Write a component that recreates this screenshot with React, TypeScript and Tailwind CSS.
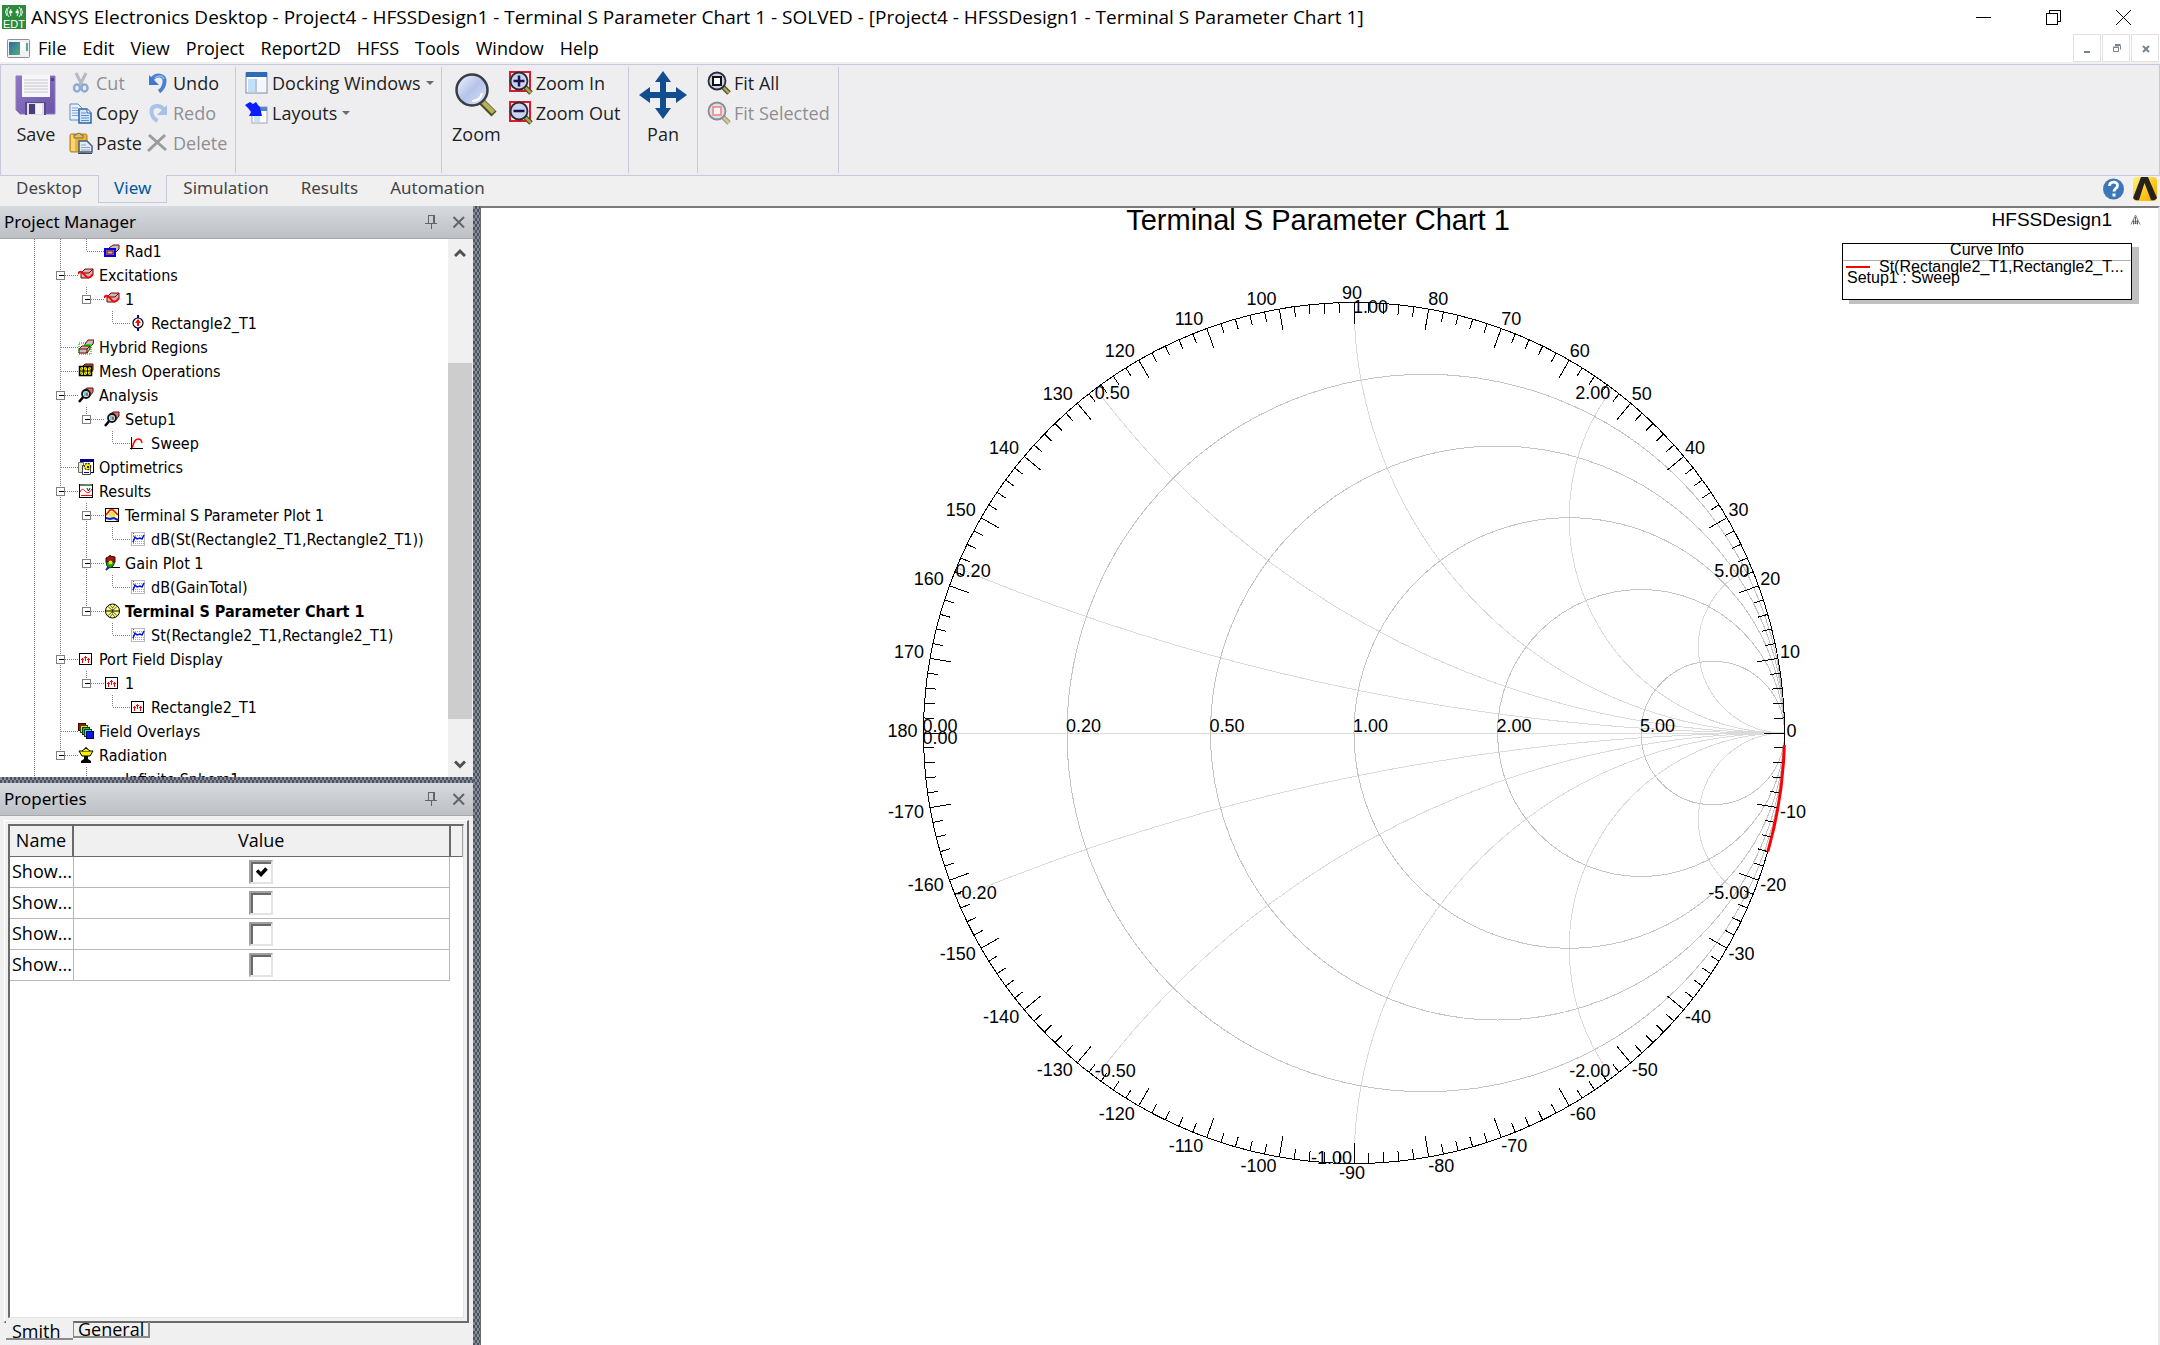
import React, { useState } from "react";

const UI = "font-['Open_Sans','Noto_Sans',sans-serif]";

/* ---------- toolbar icons ---------- */

const SaveIcon = () => (
  <svg width="42" height="42" viewBox="0 0 42 42">
    <defs>
      <linearGradient id="sv" x1="0" y1="0" x2="1" y2="1">
        <stop offset="0" stopColor="#8f78c6" />
        <stop offset="1" stopColor="#6a55a8" />
      </linearGradient>
    </defs>
    <path d="M1 2h39v38H5l-4-4z" fill="url(#sv)" />
    <path d="M1 2h39v38H5l-4-4z" fill="none" stroke="#8f7fc0" />
    <rect x="7" y="1" width="28" height="22" fill="#f7f7f9" />
    <path d="M9 6h24M9 9h24M9 12h24M9 15h24M9 18h24" stroke="#c4c4cc" />
    <rect x="36" y="4" width="3" height="3" fill="#54418c" />
    <rect x="10" y="28" width="21" height="13" fill="#5a488f" />
    <rect x="12" y="29" width="17" height="12" fill="#dcdce2" />
    <rect x="14" y="30" width="6" height="10" fill="#4a3d78" />
    <rect x="21" y="30" width="6" height="10" fill="#f4f4f6" />
  </svg>
);
const CutIcon = () => (
  <svg width="24" height="24" viewBox="0 0 24 24" fill="none">
    <path d="M7 2l6 12M17 2l-6 12" stroke="#b4bac4" strokeWidth="3" />
    <ellipse cx="8" cy="17" rx="3" ry="3.500" stroke="#8fa9d4" strokeWidth="2.500" />
    <ellipse cx="15.500" cy="17" rx="3" ry="3.500" stroke="#8fa9d4" strokeWidth="2.500" />
  </svg>
);
const CopyIcon = () => (
  <svg width="24" height="24" viewBox="0 0 24 24">
    <path d="M1 3h8l4 4v12H1z" fill="#e9f1fc" stroke="#5d8cca" />
    <path d="M3 7h6M3 9.500h8M3 12h8M3 14.500h8" stroke="#7aa3da" />
    <path d="M10 8h8l4 4v10H10z" fill="#d6e6fa" stroke="#2f64ab" strokeWidth="1.500" />
    <path d="M12 12h5M12 14.500h8M12 17h8M12 19.500h8" stroke="#5c8fd2" />
    <path d="M18 8v4h4" fill="#fff" stroke="#2f64ab" />
  </svg>
);
const PasteIcon = () => (
  <svg width="24" height="24" viewBox="0 0 24 24">
    <rect x="1" y="3" width="17" height="18" rx="1.500" fill="#e9b437" stroke="#b17a1a" />
    <path d="M2 4h4v16H2z" fill="#f8d774" />
    <path d="M5 7V4h2.500a2.300 2.300 0 0 1 4.500 0H14v3z" fill="#d8c27a" stroke="#8a6a2a" />
    <path d="M10 10h8l5 5v6H10z" fill="#e3ebf5" stroke="#4a5e7c" strokeWidth="1.500" />
    <path d="M12 14h5M12 16.500h9M12 19h9" stroke="#8ba4c4" />
    <path d="M9 22.500h14" stroke="#3d4656" />
  </svg>
);
const UndoIcon = () => (
  <svg width="24" height="24" viewBox="0 0 24 24" fill="none">
    <path d="M6 8c4-5 13-5 12.500 3C18.200 15.500 16 18.500 13 20.500" stroke="#4a80d0" strokeWidth="4" />
    <path d="M3 4v10h10z" fill="#3f78ce" />
    <path d="M9 7c3-3 8-2.500 9 1" stroke="#8fb6ee" strokeWidth="1.500" />
  </svg>
);
const RedoIcon = () => (
  <svg width="24" height="24" viewBox="0 0 24 24" fill="none">
    <path d="M18 8.500C14 3 5 4 5.500 11c.2 4.500 2.500 7 6 9" stroke="#aac3e8" strokeWidth="4" />
    <path d="M21 4v10H11z" fill="#a6c0e6" />
  </svg>
);
const DeleteIcon = () => (
  <svg width="24" height="24" viewBox="0 0 24 24" fill="none">
    <path d="M3 4l17 15M19 4L2 20" stroke="#9b9b9b" strokeWidth="3" />
  </svg>
);
const DockIcon = () => (
  <svg width="24" height="24" viewBox="0 0 24 24">
    <rect x="1" y="2" width="21" height="20" fill="#fff" stroke="#7d8aa0" />
    <rect x="1" y="1" width="21" height="5" fill="#2f6cb8" />
    <rect x="3" y="8" width="7" height="13" fill="#bfe0f7" />
    <path d="M11 8v13" stroke="#7d8aa0" />
    <path d="M12 9h9v12h-9z" fill="#f3f6fa" />
  </svg>
);
const LayoutsIcon = () => (
  <svg width="24" height="24" viewBox="0 0 24 24">
    <rect x="7" y="6" width="15" height="16" fill="#fff" stroke="#9aa4b4" />
    <rect x="12" y="6" width="10" height="4" fill="#4f86c6" />
    <rect x="9" y="15" width="6" height="6" fill="#c6e3f7" />
    <path d="M0 4l5-3 3 2 3-2 2 3 2 2 2 9-13 0 2-4-3-4z" fill="#0a1cff" />
  </svg>
);
const Lens = ({ kind, faded = false }: { kind: "in" | "out" | "fit"; faded?: boolean }) => (
  <svg width="24" height="24" viewBox="0 0 24 24" opacity={faded ? 0.5 : 1}>
    {kind !== "fit" && <path d="M1 1h20v19H1z" fill="none" stroke="#e0182c" strokeWidth="2" />}
    <path d="M16 16l6 6" stroke="#4c4a1c" strokeWidth="5" />
    <path d="M16 16l6 6" stroke="#a9a552" strokeWidth="2.500" />
    <circle cx="10" cy="10" r="8.500" fill="#c9d2ee" stroke="#2b2b33" strokeWidth="1.800" />
    {kind === "in" && <path d="M10 4.500v11M4.500 10h11" stroke="#1d1350" strokeWidth="2.500" />}
    {kind === "out" && <path d="M4.500 10h11" stroke="#1d1350" strokeWidth="2.500" />}
    {kind === "fit" && (
      <rect x="6" y="6" width="8" height="8" fill="#fff" stroke={faded ? "#f04a3a" : "#111"} strokeWidth="2" />
    )}
  </svg>
);
const ZoomIcon = () => (
  <svg width="44" height="46" viewBox="0 0 44 46">
    <defs>
      <linearGradient id="zm" x1="0" y1="0" x2="1" y2="1">
        <stop offset="0" stopColor="#f3f6fe" />
        <stop offset="0.500" stopColor="#b4c3ea" />
        <stop offset="1" stopColor="#dfe7fb" />
      </linearGradient>
    </defs>
    <path d="M28 30l12 12" stroke="#4e4b20" strokeWidth="7" />
    <path d="M28 29l11.500 11.500" stroke="#b5b05c" strokeWidth="4.500" />
    <circle cx="18" cy="18" r="15.500" fill="url(#zm)" stroke="#3a3d44" strokeWidth="2.500" />
    <path d="M18 29c6 0 9-3 10-8" fill="none" stroke="#fff" strokeWidth="2" />
  </svg>
);
const PanIcon = () => (
  <svg width="48" height="48" viewBox="0 0 48 48" fill="#124e8f">
    <path d="M24 0l8 11h-5v10h10v-5l11 8-11 8v-5H27v10h5l-8 11-8-11h5V27H11v5L0 24l11-8v5h10V11h-5z" />
  </svg>
);

/* ---------- tree icons (16 x 16 pixel art) ---------- */

type IconName =
  | "rad" | "exc" | "term" | "hyb" | "mesh" | "ana" | "sweep" | "opt" | "res"
  | "plot" | "trace" | "gain" | "smith" | "port" | "over" | "radn" | "none";

const TreeIcon = ({ name }: { name: IconName }) => {
  const art: Record<IconName, React.ReactNode> = {
    none: null,
    rad: (
      <>
        <path d="M5 5l4-3h6v4l-4 4z" fill="#c0c0c0" stroke="#800000" />
        <rect x="1" y="6" width="10" height="7" fill="#c08080" stroke="#0000f0" strokeWidth="2" />
        <rect x="3" y="8" width="6" height="3" fill="#c0c0c0" stroke="#800000" />
      </>
    ),
    exc: (
      <>
        <path d="M3 6l4-4h8v5l-4 4H3z" fill="#c8b8b8" stroke="#800000" />
        <path d="M3 6h8l4-4" fill="none" stroke="#800000" />
        <path d="M0 7c1-3 4-3 6 0s5 6 9 0" fill="none" stroke="#ff0000" strokeWidth="2" />
      </>
    ),
    term: (
      <>
        <path d="M8 0v16" stroke="#0000e0" strokeWidth="2" />
        <circle cx="8" cy="8" r="5" fill="#fff" stroke="#000" strokeWidth="1.200" />
        <path d="M8 5v6" stroke="#f00" strokeWidth="2" />
        <path d="M5 8l3-4 3 4z" fill="#f00" />
      </>
    ),
    hyb: (
      <>
        <rect x="1" y="4" width="12" height="11" fill="none" stroke="#00f000" strokeWidth="1.500" strokeDasharray="1 1" />
        <path d="M7 5l3-4h6l-1 4-2 2H8z" fill="#c0c0c0" stroke="#800000" />
        <path d="M6 5h8l-1 4H5z" fill="#20e020" />
        <path d="M1 10l3-3h8v3l-3 4H1z" fill="#c0c0c0" stroke="#800000" />
        <path d="M1 10h8l3-3M9 10v4" fill="none" stroke="#800000" />
      </>
    ),
    mesh: (
      <>
        <path d="M4 4l3-3h8v6l-2 3" fill="#a06060" stroke="#600000" />
        <rect x="1.500" y="3.500" width="12" height="9" fill="#ffff00" stroke="#000" strokeWidth="1.500" />
        <path d="M5.500 3.500v9M9.500 3.500v9M1.500 8h12" stroke="#000" />
        <path d="M1.500 3.500l4 4.500 4-4.500 4 4.500M1.500 12.500l4-4.500 4 4.500 4-4.500" stroke="#000" strokeWidth="0.600" fill="none" />
      </>
    ),
    ana: (
      <>
        <path d="M5 4l4-3h6v4l-4 5z" fill="#c08080" stroke="#800000" />
        <path d="M1 15l5-6" stroke="#000" strokeWidth="2.500" />
        <circle cx="8" cy="7" r="4" fill="#c8e4ea" stroke="#111" strokeWidth="1.800" />
        <path d="M7 5v4M9 5v3" stroke="#2ab0c0" />
        <path d="M9 6v3" stroke="#900" />
      </>
    ),
    sweep: (
      <>
        <path d="M1.500 2v12.500M0 13.500h13" stroke="#000" fill="none" />
        <path d="M2 13C4 7 5 4 8 4s3 1 4 4" fill="none" stroke="#f00" strokeWidth="1.500" />
      </>
    ),
    opt: (
      <>
        <rect x="2.500" y="0.500" width="13" height="13" fill="#fff" stroke="#000" />
        <rect x="2" y="0" width="14" height="3" fill="#000080" />
        <path d="M.500 3.500h5v10h-5z" fill="#e8e8d0" stroke="#707060" />
        <path d="M4.500 6.500h8v9h-8z" fill="#fff" stroke="#404040" />
        <circle cx="9.500" cy="7.500" r="3.200" fill="#ffe800" stroke="#303000" strokeWidth="1.200" strokeDasharray="2 1" />
        <rect x="9" y="7" width="2" height="2" fill="#303000" />
        <path d="M6 13.500h5" stroke="#0000c0" />
      </>
    ),
    res: (
      <>
        <rect x="1.500" y="1.500" width="13" height="13" fill="#fff" stroke="#000" />
        <rect x="2" y="1" width="12" height="2" fill="#707070" />
        <rect x="7" y="1" width="5" height="1" fill="#20d020" />
        <path d="M2 9c2-4 3-3 5-1s4 3 7-2" fill="none" stroke="#f00" />
        <path d="M3 12.500h11" stroke="#f00" />
        <path d="M9 5l1.500 3 1.500-3" fill="none" stroke="#222" />
      </>
    ),
    plot: (
      <>
        <rect x="1.500" y="1.500" width="13" height="13" fill="#fffbb8" stroke="#000" />
        <path d="M5 8h6M8 5v6" stroke="#e8d820" />
        <circle cx="8" cy="8" r="2.500" stroke="#e8d820" />
        <path d="M2 8l4-5h3l5 5" fill="none" stroke="#f00" strokeWidth="1.500" />
        <path d="M2 11l4 1 4-1 4 2" fill="none" stroke="#0020f0" strokeWidth="2" />
      </>
    ),
    trace: (
      <>
        <rect x="1.500" y="1.500" width="13" height="13" fill="#fff" stroke="#b8b8b8" />
        <path d="M3 4.500h11M3 12.500h11M3 10.500h11" stroke="#20d8e8" strokeDasharray="1 1" />
        <path d="M3.500 2v12" stroke="#e04040" strokeDasharray="1 2" />
        <path d="M3 11l2-5 2 2 3-1 2 1 2-4" fill="none" stroke="#0010e0" strokeWidth="1.500" />
      </>
    ),
    gain: (
      <>
        <path d="M6 0v3M2 15l5-4M7 12.500h9" stroke="#000" strokeWidth="1.200" />
        <path d="M2 3l4-2 5 1v5H2z" fill="#a01818" stroke="#400" />
        <path d="M2 7h9l-2 4-3 2-3-2z" fill="#20a020" stroke="#064006" />
        <circle cx="6.500" cy="7.500" r="2" fill="#f0e020" />
        <path d="M4 12l-2 3" stroke="#2030c0" strokeWidth="1.500" />
      </>
    ),
    smith: (
      <>
        <circle cx="8.500" cy="8" r="7" fill="#ffff80" stroke="#000" />
        <path d="M1.500 8h14" stroke="#000" />
        <path d="M8.500 5.500v5M4 3.500l4.500 4L13 3.500M4 12.500l4.500-4 4.500 4M6 2l2.500 3L11 2M6 14l2.500-3 2.500 3" stroke="#222" strokeWidth="0.700" />
      </>
    ),
    port: (
      <>
        <rect x="1.500" y="2.500" width="12" height="11" fill="#fff" stroke="#000" />
        <path d="M4.500 7v5M7.500 5v5M10.500 7v5M3 8.500h3M6 6.500h3M9 8.500h3" stroke="#f00" />
      </>
    ),
    over: (
      <>
        <rect x="0.500" y="0.500" width="7" height="7" fill="#a01010" stroke="#500" />
        <rect x="2.500" y="2.500" width="7" height="7" fill="#f0e020" stroke="#440" />
        <rect x="4.500" y="4.500" width="7" height="7" fill="#20c020" stroke="#040" />
        <rect x="6.500" y="6.500" width="7" height="7" fill="#40e0e0" stroke="#044" />
        <rect x="8.500" y="8.500" width="7" height="7" fill="#0018e8" stroke="#004" />
      </>
    ),
    radn: (
      <>
        <path d="M8 0v4M6 2h4" stroke="#000" strokeWidth="1.200" />
        <path d="M1 4h14l-3 5H4z" fill="#f8f000" stroke="#000" />
        <path d="M4 4l4-3 4 3" fill="#f8f000" stroke="#000" />
        <path d="M6 9h4v3l3 2v2H3v-2l3-2z" fill="#000" />
      </>
    ),
  };
  return (
    <svg className="shrink-0" width="16" height="16" viewBox="0 0 16 16" fill="none">
      {art[name]}
    </svg>
  );
};

/* ---------- project tree ---------- */

type Row = {
  label: string;
  icon: IconName;
  level: 2 | 3 | 4;
  open?: boolean;
  last?: boolean;
  lines: number[];
  bold?: boolean;
};

const rows: Row[] = [
  { label: "Rad1", icon: "rad", level: 3, last: true, lines: [0, 1] },
  { label: "Excitations", icon: "exc", level: 2, open: true, lines: [0] },
  { label: "1", icon: "exc", level: 3, open: true, last: true, lines: [0, 1] },
  { label: "Rectangle2_T1", icon: "term", level: 4, last: true, lines: [0, 1] },
  { label: "Hybrid Regions", icon: "hyb", level: 2, lines: [0] },
  { label: "Mesh Operations", icon: "mesh", level: 2, lines: [0] },
  { label: "Analysis", icon: "ana", level: 2, open: true, lines: [0] },
  { label: "Setup1", icon: "ana", level: 3, open: true, last: true, lines: [0, 1] },
  { label: "Sweep", icon: "sweep", level: 4, last: true, lines: [0, 1] },
  { label: "Optimetrics", icon: "opt", level: 2, lines: [0] },
  { label: "Results", icon: "res", level: 2, open: true, lines: [0] },
  { label: "Terminal S Parameter Plot 1", icon: "plot", level: 3, open: true, lines: [0, 1] },
  { label: "dB(St(Rectangle2_T1,Rectangle2_T1))", icon: "trace", level: 4, last: true, lines: [0, 1, 2] },
  { label: "Gain Plot 1", icon: "gain", level: 3, open: true, lines: [0, 1] },
  { label: "dB(GainTotal)", icon: "trace", level: 4, last: true, lines: [0, 1, 2] },
  { label: "Terminal S Parameter Chart 1", icon: "smith", level: 3, open: true, last: true, lines: [0, 1], bold: true },
  { label: "St(Rectangle2_T1,Rectangle2_T1)", icon: "trace", level: 4, last: true, lines: [0, 1] },
  { label: "Port Field Display", icon: "port", level: 2, open: true, lines: [0] },
  { label: "1", icon: "port", level: 3, open: true, last: true, lines: [0, 1] },
  { label: "Rectangle2_T1", icon: "port", level: 4, last: true, lines: [0, 1] },
  { label: "Field Overlays", icon: "over", level: 2, lines: [0] },
  { label: "Radiation", icon: "radn", level: 2, open: true, last: true, lines: [0] },
  { label: "Infinite Sphere1", icon: "none", level: 3, last: true, lines: [0] },
];

const colX = (c: number) => 34.5 + 26 * c;

const Guides = ({ row }: { row: Row }) => {
  const own = row.level - 1;
  const x = colX(own);
  return (
    <svg className="shrink-0" width={x + 17.5} height="24" shapeRendering="crispEdges" fill="none" stroke="#808080">
      {row.lines.map((c) => (
        <path key={c} d={`M${colX(c)} 0V24`} strokeDasharray="1 1" />
      ))}
      <path d={`M${x} 0V${row.last ? 12 : 24}`} strokeDasharray="1 1" />
      <path d={`M${x} 12.500H${x + 17}`} strokeDasharray="1 1" />
      {row.open && (
        <>
          <rect x={x - 4} y="8.500" width="8" height="8" fill="#fff" />
          <path d={`M${x - 2} 12.500h5`} stroke="#000" />
        </>
      )}
    </svg>
  );
};

const Chevron = ({ down = false }: { down?: boolean }) => (
  <svg width="12" height="10" viewBox="0 0 12 10" fill="none" stroke="#505050" strokeWidth="3">
    <path d={down ? "M1 1.500l5 5 5-5" : "M1 8l5-5 5 5"} />
  </svg>
);

const DockHeader = ({ title }: { title: string }) => (
  <header className="flex h-[33px] shrink-0 items-center border-b border-[#a8a8a8] bg-linear-to-b from-[#d7dbe0] to-[#bcc0c5] pr-[7px] pl-1">
    <h2 className="flex-1 font-['Noto_Sans',sans-serif] text-[17px] leading-6 text-black">{title}</h2>
    <button type="button" aria-label={`Pin ${title}`} className="mr-[15px]">
      <svg width="12" height="14" viewBox="0 0 12 14" fill="none" stroke="#646464" shapeRendering="crispEdges">
        <path d="M3.500 0v8M3 .500h6M8 0v8M9 0v8M0 8.500h12M6 9v5" />
      </svg>
    </button>
    <button type="button" aria-label={`Close ${title}`}>
      <svg width="14" height="14" viewBox="0 0 14 14" fill="none" stroke="#646464" strokeWidth="2">
        <path d="M1.500 2l10.500 10.500M12 2L1.500 12.500" />
      </svg>
    </button>
  </header>
);

/* ---------- ribbon ---------- */

const Small = ({ icon, label, off = false, menu = false }: { icon: React.ReactNode; label: string; off?: boolean; menu?: boolean }) => (
  <button
    type="button"
    disabled={off}
    className="flex h-[30px] items-center gap-[3px] text-left whitespace-nowrap text-[#1e1e1e] disabled:text-[#8f8f8f]"
  >
    <span className="block h-6 w-6 shrink-0">{icon}</span>
    <span>{label}</span>
    {menu && (
      <svg className="ml-[2px]" width="8" height="4" viewBox="0 0 8 4" fill="#6a6a6a">
        <path d="M0 0h8L4 4z" />
      </svg>
    )}
  </button>
);

const Big = ({ icon, label }: { icon: React.ReactNode; label: string }) => (
  <button type="button" className="flex h-[78px] flex-col items-center text-[#1e1e1e]">
    <span className="flex h-[54px] items-center justify-center">{icon}</span>
    <span className="leading-6">{label}</span>
  </button>
);

const Group = ({ children, className }: { children: React.ReactNode; className: string }) => (
  <div className={`my-[2px] flex border-r border-[#c6c8dc] pt-px ${className}`}>{children}</div>
);

/* ---------- Smith chart ---------- */

const CX = 873;
const CY = 525;
const R = 430.5;
const rad = (d: number) => (d * Math.PI) / 180;
const on = (deg: number, r = R): [number, number] => [CX + r * Math.cos(rad(deg)), CY - r * Math.sin(rad(deg))];

const SmithChart = () => {
  const ticks = Array.from({ length: 180 }, (_, i) => i * 2);
  const angles = Array.from({ length: 36 }, (_, i) => (i - 17) * 10);
  const rs = [0.2, 0.5, 1, 2, 5];
  const [ax, ay] = on(-1.6);
  const [bx, by] = on(-16);
  return (
    <svg className="block h-full w-full" viewBox="0 0 1677 1137" fill="none" role="img" aria-label="Smith chart">
      <text x="837" y="22" fontSize="29" fill="#000" textAnchor="middle">
        Terminal S Parameter Chart 1
      </text>
      <g stroke="#dadada" shapeRendering="crispEdges">
        <path d={`M${CX - R} ${CY + 0.5}H${CX + R}`} />
        {rs.map((x) => {
          const a = 180 - (2 * Math.atan(x) * 180) / Math.PI;
          const [px, py] = on(a);
          const [qx, qy] = on(-a);
          const r = R / x;
          return (
            <g key={x}>
              <path d={`M${px} ${py}A${r} ${r} 0 0 0 ${CX + R} ${CY}`} />
              <path d={`M${qx} ${qy}A${r} ${r} 0 0 1 ${CX + R} ${CY}`} />
            </g>
          );
        })}
      </g>
      <g stroke="#c4c4c4" shapeRendering="crispEdges">
        {rs.map((r) => (
          <circle key={r} cx={CX + (R * r) / (1 + r)} cy={CY} r={R / (1 + r)} />
        ))}
      </g>
      <g stroke="#000" shapeRendering="crispEdges">
        <circle cx={CX} cy={CY} r={R} />
        {ticks.map((t) => {
          const [x1, y1] = on(t);
          const [x2, y2] = on(t, R - (t % 10 === 0 ? 21 : 10));
          return <path key={t} d={`M${x1} ${y1}L${x2} ${y2}`} />;
        })}
      </g>
      <path d={`M${ax} ${ay}A${R} ${R} 0 0 1 ${bx} ${by}`} stroke="#ff0000" strokeWidth="3" />
      <g fontSize="18" fill="#000">
        {angles.map((a) => {
          const [x, y] = on(a);
          const c = Math.cos(rad(a));
          const s = Math.sin(rad(a));
          const mid = Math.abs(a) === 90;
          const dy = a === 0 || a === 180 ? 4 : a > 0 ? 1 - 5 * s : 9 - 6 * s;
          const dx = mid ? -2 : c > 0 ? 3 * c - 1 : -2 + 4 * c;
          return (
            <text key={a} x={x + dx} y={y + dy} textAnchor={mid ? "middle" : c > 0 ? "start" : "end"}>
              {a}
            </text>
          );
        })}
        {[0, ...rs].map((r) => (
          <text key={r} x={CX + R * (1 - 2 / (1 + r)) - 1} y={CY - 1}>
            {r.toFixed(2)}
          </text>
        ))}
        <text x={CX - R - 1} y={CY + 11}>
          0.00
        </text>
        {rs.map((v) => {
          const a = 180 - (2 * Math.atan(v) * 180) / Math.PI;
          const [x, y] = on(a);
          const [nx, ny] = on(-a);
          return (
            <g key={v}>
              <text x={v > 1 ? x - 2 : x - 1} y={y + 10} textAnchor={v > 1 ? "end" : "start"}>
                {v.toFixed(2)}
              </text>
              <text x={v >= 1 ? nx - 2 : nx - 1} y={ny} textAnchor={v >= 1 ? "end" : "start"}>
                {(-v).toFixed(2)}
              </text>
            </g>
          );
        })}
      </g>
    </svg>
  );
};

const splitter =
  "shrink-0 bg-[#808080] bg-[conic-gradient(#4a5268_25%,#8a8d93_0_50%,#4a5268_0_75%,#8a8d93_0)] bg-[length:4px_6px]";

const menus = ["File", "Edit", "View", "Project", "Report2D", "HFSS", "Tools", "Window", "Help"];
const tabs = ["Desktop", "View", "Simulation", "Results", "Automation"];

export default function App() {
  const [shown, setShown] = useState([true, false, false, false]);
  return (
    <div className={`flex h-screen flex-col overflow-hidden bg-white text-black ${UI}`}>
      {/* title bar */}
      <div className="flex h-[34px] shrink-0 items-center pr-[29px] pl-[2px]">
        <svg className="mr-[5px]" width="24" height="24" viewBox="0 0 24 24">
          <rect width="24" height="24" fill="#2c8a3c" />
          <g fill="none" stroke="#e6f4e6" strokeWidth="1">
            <path d="M7 2q-4 5 0 10M9 4q-3 3 0 7M15 4q3 3 0 7M17 2q4 5 0 10M5 3q-3 4 0 8M19 3q3 4 0 8" />
          </g>
          <circle cx="9" cy="7" r="1.500" fill="#fff" />
          <circle cx="15" cy="7" r="1.500" fill="#fff" />
          <text x="12" y="23" fontSize="11" textAnchor="middle" fill="#fff" fontFamily="Liberation Sans">
            EDT
          </text>
        </svg>
        <h1 className="flex-1 text-[19px] leading-7 whitespace-nowrap">
          ANSYS Electronics Desktop - Project4 - HFSSDesign1 - Terminal S Parameter Chart 1 - SOLVED - [Project4 -
          HFSSDesign1 - Terminal S Parameter Chart 1]
        </h1>
        <div className="flex gap-[55px]">
          <button type="button" aria-label="Minimize">
            <svg width="15" height="15" stroke="#000" shapeRendering="crispEdges">
              <path d="M0 7.500h15" />
            </svg>
          </button>
          <button type="button" aria-label="Restore">
            <svg width="15" height="15" fill="none" stroke="#000" shapeRendering="crispEdges">
              <path d="M.500 3.500h11v11H.500zM3.500 3V.500h11v11H12" />
            </svg>
          </button>
          <button type="button" aria-label="Close">
            <svg width="15" height="15" stroke="#000">
              <path d="M0 0l15 15M15 0L0 15" />
            </svg>
          </button>
        </div>
      </div>

      {/* menu bar */}
      <div className="flex h-[28px] shrink-0 items-center pl-[7px]">
        <svg width="23" height="19" viewBox="0 0 23 19">
          <defs>
            <linearGradient id="mi" x1="0" y1="0" x2="1" y2="1">
              <stop offset="0" stopColor="#2c6aa8" />
              <stop offset="1" stopColor="#58b070" />
            </linearGradient>
          </defs>
          <rect x="0.500" y="0.500" width="22" height="18" rx="1" fill="#eef2f6" stroke="#8f8f8f" />
          <rect x="2" y="3" width="11" height="13" fill="url(#mi)" />
          <rect x="14" y="3" width="4" height="8" fill="#fff" />
          <rect x="19" y="4" width="2" height="8" fill="#5aa890" />
        </svg>
        <nav className="flex flex-1 gap-4 pl-2 text-[18px] leading-6">
          {menus.map((m) => (
            <button key={m} type="button">
              {m}
            </button>
          ))}
        </nav>
        <div className="flex h-[28px] gap-px self-end pr-px text-[#76828e]">
          {[
            <path key="m" d="M10 17h6" strokeWidth="2" />,
            <path key="r" d="M10.500 12.500h5v4h-5zM10 12h6M12 9.500h5.500M12 10.500h5.500v4" />,
            <path key="c" d="M11 11l6 6M17 11l-6 6" strokeWidth="2" />,
          ].map((p, i) => (
            <button
              key={i}
              type="button"
              aria-label={["Minimize chart", "Restore chart", "Close chart"][i]}
              className="h-[28px] w-7 border border-[#e2e2e2]"
            >
              <svg width="26" height="26" fill="none" stroke="currentColor">
                {p}
              </svg>
            </button>
          ))}
        </div>
      </div>
      <div className="h-[2px] shrink-0 bg-[#f0f0f0]" />

      {/* ribbon */}
      <div className="flex h-[112px] shrink-0 border border-[#c6c8dc] bg-[#eeeef1] text-[18px]">
        <Group className="w-[235px] pl-[14px]">
          <Big icon={<SaveIcon />} label="Save" />
          <div className="ml-3 flex w-[77px] flex-col">
            <Small icon={<CutIcon />} label="Cut" off />
            <Small icon={<CopyIcon />} label="Copy" />
            <Small icon={<PasteIcon />} label="Paste" />
          </div>
          <div className="flex flex-col">
            <Small icon={<UndoIcon />} label="Undo" />
            <Small icon={<RedoIcon />} label="Redo" off />
            <Small icon={<DeleteIcon />} label="Delete" off />
          </div>
        </Group>
        <Group className="w-[206px] pl-[9px]">
          <div className="flex flex-col">
            <Small icon={<DockIcon />} label="Docking Windows" menu />
            <Small icon={<LayoutsIcon />} label="Layouts" menu />
          </div>
        </Group>
        <Group className="w-[187px] pl-[10px]">
          <Big icon={<ZoomIcon />} label="Zoom" />
          <div className="ml-2 flex flex-col">
            <Small icon={<Lens kind="in" />} label="Zoom In" />
            <Small icon={<Lens kind="out" />} label="Zoom Out" />
          </div>
        </Group>
        <Group className="w-[69px] justify-center">
          <Big icon={<PanIcon />} label="Pan" />
        </Group>
        <Group className="w-[141px] pl-[9px]">
          <div className="flex flex-col">
            <Small icon={<Lens kind="fit" />} label="Fit All" />
            <Small icon={<Lens kind="fit" faded />} label="Fit Selected" off />
          </div>
        </Group>
      </div>
      <div className="flex h-[30px] shrink-0 items-start bg-[#f0f0f0] font-['Noto_Sans',sans-serif] text-[17px] leading-[22px] text-[#444]">
        <div className="flex flex-1" role="tablist" aria-label="Ribbon">
          {tabs.map((t) => (
            <button
              key={t}
              type="button"
              role="tab"
              aria-selected={t === "View"}
              className="-mt-px h-[28px] border border-t-0 border-transparent px-[15px] pb-[2px] aria-selected:border-[#c6c8dc] aria-selected:bg-[#eeeef1] aria-selected:text-[#005a9e]"
            >
              {t}
            </button>
          ))}
        </div>
        <div className="flex items-center gap-[9px] pt-px pr-[3px]">
          <button type="button" aria-label="Help">
            <svg width="21" height="24" viewBox="0 0 21 24">
              <circle cx="10.500" cy="12" r="10.500" fill="#3c78b8" />
              <path d="M6.500 9c0-5 8-5 8-.500 0 3-3.500 3-3.500 6" fill="none" stroke="#fff" strokeWidth="2.800" />
              <rect x="9.500" y="16.500" width="3" height="3" fill="#fff" />
            </svg>
          </button>
          <button type="button" aria-label="ANSYS">
            <svg width="24" height="24" viewBox="0 0 24 24">
              <defs>
                <linearGradient id="an" x1="0" y1="0" x2="1" y2="1">
                  <stop offset="0" stopColor="#fff27a" />
                  <stop offset="0.600" stopColor="#ffc61a" />
                  <stop offset="1" stopColor="#f9a800" />
                </linearGradient>
              </defs>
              <rect width="24" height="24" rx="4" fill="url(#an)" />
              <path d="M8 0h7l9 21q-2 3-6 2L11.500 6 6 23q-4 1-6-2z" fill="#26221f" />
            </svg>
          </button>
        </div>
      </div>

      <div className="flex min-h-0 flex-1">
        {/* docked panes */}
        <aside className="flex w-[473px] shrink-0 flex-col bg-[#f0f0f0]">
          <section className="flex h-[571px] shrink-0 flex-col">
            <DockHeader title="Project Manager" />
            <div className="flex min-h-0 flex-1 bg-white">
              <ul className="min-w-0 flex-1 overflow-hidden font-['DejaVu_Sans_Condensed','DejaVu_Sans',sans-serif] text-[16px] leading-6">
                {rows.map((row, i) => (
                  <li key={i} className="flex h-6 items-center">
                    <Guides row={row} />
                    <TreeIcon name={row.icon} />
                    <span
                      className={
                        row.bold
                          ? "pt-[2px] pl-[5px] font-bold whitespace-nowrap"
                          : "pt-[2px] pl-[5px] whitespace-nowrap"
                      }
                    >
                      {row.label}
                    </span>
                  </li>
                ))}
              </ul>
              <div className="flex w-[25px] flex-col items-center bg-[#f0f0f0] pr-px">
                <div className="flex h-[124px] pt-[9px]">
                  <Chevron />
                </div>
                <div className="h-[356px] w-full bg-[#cdcdcd]" />
                <div className="flex flex-1 items-end pb-[7px]">
                  <Chevron down />
                </div>
              </div>
            </div>
          </section>
          <div className={`h-[6px] ${splitter}`} />
          <section className="flex min-h-0 flex-1 flex-col">
            <DockHeader title="Properties" />
            <div className="mt-1 mr-1 ml-1 flex min-h-0 flex-1 flex-col border-t border-r-2 border-b-2 border-l border-t-white border-r-[#6a6a6a] border-b-[#6a6a6a] border-l-white p-[3px]">
              <div className="min-h-0 flex-1 border border-t-2 border-l-2 border-[#e3e3e3] border-t-[#6a6a6a] border-l-[#6a6a6a] bg-white">
                <table className="w-full table-fixed border-collapse text-[18px] leading-6">
                  <colgroup>
                    <col className="w-[63px]" />
                    <col />
                    <col className="w-[13px]" />
                  </colgroup>
                  <thead>
                    <tr className="h-[30px] border-b border-[#6a6a6a] bg-[#f0f0f0]">
                      <th className="border-r-2 border-[#6a6a6a] p-0 pb-px font-normal">Name</th>
                      <th className="border-r-2 border-[#6a6a6a] p-0 pb-px font-normal">Value</th>
                      <th aria-label="Spacer" className="border-r border-[#a0a0a0] p-0" />
                    </tr>
                  </thead>
                  <tbody>
                    {shown.map((v, i) => (
                      <tr key={i} className="h-[31px]">
                        <td className="border-r border-b border-[#b8b8b8] p-0 pb-px pl-[2px]">
                          <label htmlFor={`show-${i}`}>Show...</label>
                        </td>
                        <td className="border-r border-b border-[#b8b8b8] p-0">
                          <span className="relative mx-auto block h-6 w-6">
                            <input
                              id={`show-${i}`}
                              type="checkbox"
                              checked={v}
                              onChange={() => setShown(shown.map((s, j) => (j === i ? !s : s)))}
                              className="block h-6 w-6 appearance-none border-2 border-t-[#a0a0a0] border-r-[#e3e3e3] border-b-[#e3e3e3] border-l-[#a0a0a0] bg-white shadow-[inset_2px_2px_0_#696969]"
                            />
                            {v && (
                              <svg className="pointer-events-none absolute top-[7px] left-[7px]" width="12" height="12">
                                <path d="M1 3.500l4 4 5.500-6" fill="none" stroke="#000" strokeWidth="3.500" />
                              </svg>
                            )}
                          </span>
                        </td>
                        <td />
                      </tr>
                    ))}
                  </tbody>
                </table>
              </div>
            </div>
            <div className="flex h-[22px] shrink-0 items-start pl-[6px] text-[18px]" role="tablist" aria-label="Properties">
              <button
                type="button"
                role="tab"
                aria-selected="true"
                className="-mt-[2px] h-[19px] w-[67px] overflow-hidden border-b-2 border-[#8a8a8a] bg-[#f0f0f0] pl-[6px] text-left leading-[20px]"
              >
                Smith
              </button>
              <button
                type="button"
                role="tab"
                aria-selected="false"
                className="-mt-px h-4 w-[77px] overflow-hidden border-r-2 border-b-2 border-l border-[#8a8a8a] pl-1 text-left leading-[14px]"
              >
                General
              </button>
            </div>
          </section>
        </aside>
        <div className={`w-[7px] ${splitter}`} />

        {/* report */}
        <main className="relative min-w-0 flex-1 border-t-2 border-r-2 border-l border-t-[#7a7a7a] border-r-[#e8e8e8] border-l-[#6a6a6a] bg-white font-['Liberation_Sans',Arial,sans-serif]">
          <SmithChart />
          <div className="absolute top-0 right-[17px] flex items-center gap-[18px] text-[19px] leading-6">
            <span>HFSSDesign1</span>
            <svg width="11" height="10" viewBox="0 0 11 10" fill="none" stroke="#808080">
              <path d="M5.500 0L1 9.500M5.500 0L10 9.500M3 5l5 4.500M8 5L3 9.500" />
              <path d="M5.500 2v7M3.500 6v3M7.500 6v3" stroke="#f02020" />
            </svg>
          </div>
          <div className="absolute top-[35px] right-[26px] w-[290px] border border-black bg-white text-[16px] shadow-[7px_4px_0_#c0c0c0]">
            <p className="h-[17px] overflow-hidden border-b border-[#b0b0b0] text-center leading-[12px]">Curve Info</p>
            <div className="flex h-[11px] items-center pr-1 pl-[3px] leading-[11px] whitespace-nowrap">
              <span className="h-[2px] w-6 bg-[#ff0000]" />
              <span className="flex-1 pl-[9px]">St(Rectangle2_T1,Rectangle2_T...</span>
            </div>
            <p className="h-[27px] pl-1 leading-[11px]">Setup1 : Sweep</p>
          </div>
        </main>
      </div>
    </div>
  );
}
